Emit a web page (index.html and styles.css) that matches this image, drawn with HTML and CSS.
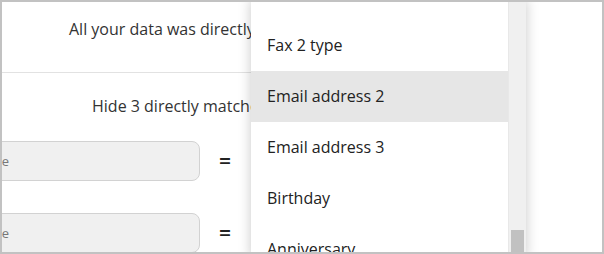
FILE: index.html
```html
<!DOCTYPE html>
<html lang="en">
<head>
    <meta charset="UTF-8">
    <title>Field matching</title>
    <link rel="stylesheet" href="styles.css">
</head>
<body>
    <div class="frame">
        <!-- Matching panel -->
        <div class="panel">
            <p class="notice">All your data was directly matched to contact fields</p>
            <div class="divider"></div>
            <p class="hide-link">Hide 3 directly matched fields</p>

            <div class="match-row">
                <div class="field"><span>Phone type</span></div>
                <span class="equals">=</span>
            </div>
            <div class="match-row">
                <div class="field"><span>Email type</span></div>
                <span class="equals">=</span>
            </div>
        </div>

        <!-- Field dropdown -->
        <div class="dropdown">
            <ul class="options">
                <li class="option"></li>
                <li class="option">Fax 2 type</li>
                <li class="option active">Email address 2</li>
                <li class="option">Email address 3</li>
                <li class="option">Birthday</li>
                <li class="option">Anniversary</li>
            </ul>
            <div class="scrollbar"><div class="thumb"></div></div>
        </div>
    </div>
</body>
</html>
```

FILE: styles.css
```css
/* Basic Styles */
html, body {
    margin: 0;
    padding: 0;
    background: #fff;
}

body {
    font-family: "Open Sans", Arial, sans-serif;
    font-size: 16px;
    line-height: 22px;
    color: #333;
}

.frame {
    position: relative;
    width: 604px;
    height: 254px;
    box-sizing: border-box;
    border: 2px solid #c2c2c2;
    overflow: hidden;
    background: #fff;
}

/* Matching panel (cut off by the open dropdown) */
.panel {
    width: 249px;
    overflow: hidden;
}

.notice {
    margin: 0;
    padding: 16px 0 0 67px;
    height: 54px;
    white-space: nowrap;
}

.divider {
    height: 1px;
    background-color: #e2e2e2;
}

.hide-link {
    margin: 0;
    padding: 22px 0 0 90px;
    height: 46px;
    white-space: nowrap;
}

.match-row {
    display: flex;
    align-items: center;
    height: 40px;
    margin-bottom: 32px;
}

.field {
    display: flex;
    align-items: center;
    justify-content: flex-end;
    width: 218px;
    height: 40px;
    box-sizing: border-box;
    margin-left: -20px;
    padding-right: 190px;
    background-color: #f0f0f0;
    border: 1px solid #d2d2d2;
    border-radius: 8px;
    color: #777;
    font-size: 13px;
    overflow: hidden;
    white-space: nowrap;
}

.field span {
    flex-shrink: 0;
}

.equals {
    margin-left: 19px;
    font-size: 21px;
    font-weight: 600;
    color: #222;
}

/* Dropdown menu */
.dropdown {
    position: absolute;
    top: -2px;
    left: 249px;
    width: 275px;
    height: 258px;
    display: flex;
    background: #fff;
    box-shadow: 0 0 12px rgba(0, 0, 0, 0.22);
}

.options {
    list-style: none;
    margin: 0;
    padding: 0;
    flex: 1;
    margin-top: -31px;
}

.option {
    height: 51px;
    line-height: 51px;
    padding-left: 16px;
    color: #222;
    white-space: nowrap;
}

.option.active {
    background-color: #e6e6e6;
}

.scrollbar {
    position: relative;
    width: 17px;
    background-color: #f0f0f0;
    border-left: 1px solid #e8e8e8;
}

.thumb {
    position: absolute;
    left: 2px;
    right: 2px;
    bottom: 0;
    height: 28px;
    background-color: #c1c1c1;
}
```
